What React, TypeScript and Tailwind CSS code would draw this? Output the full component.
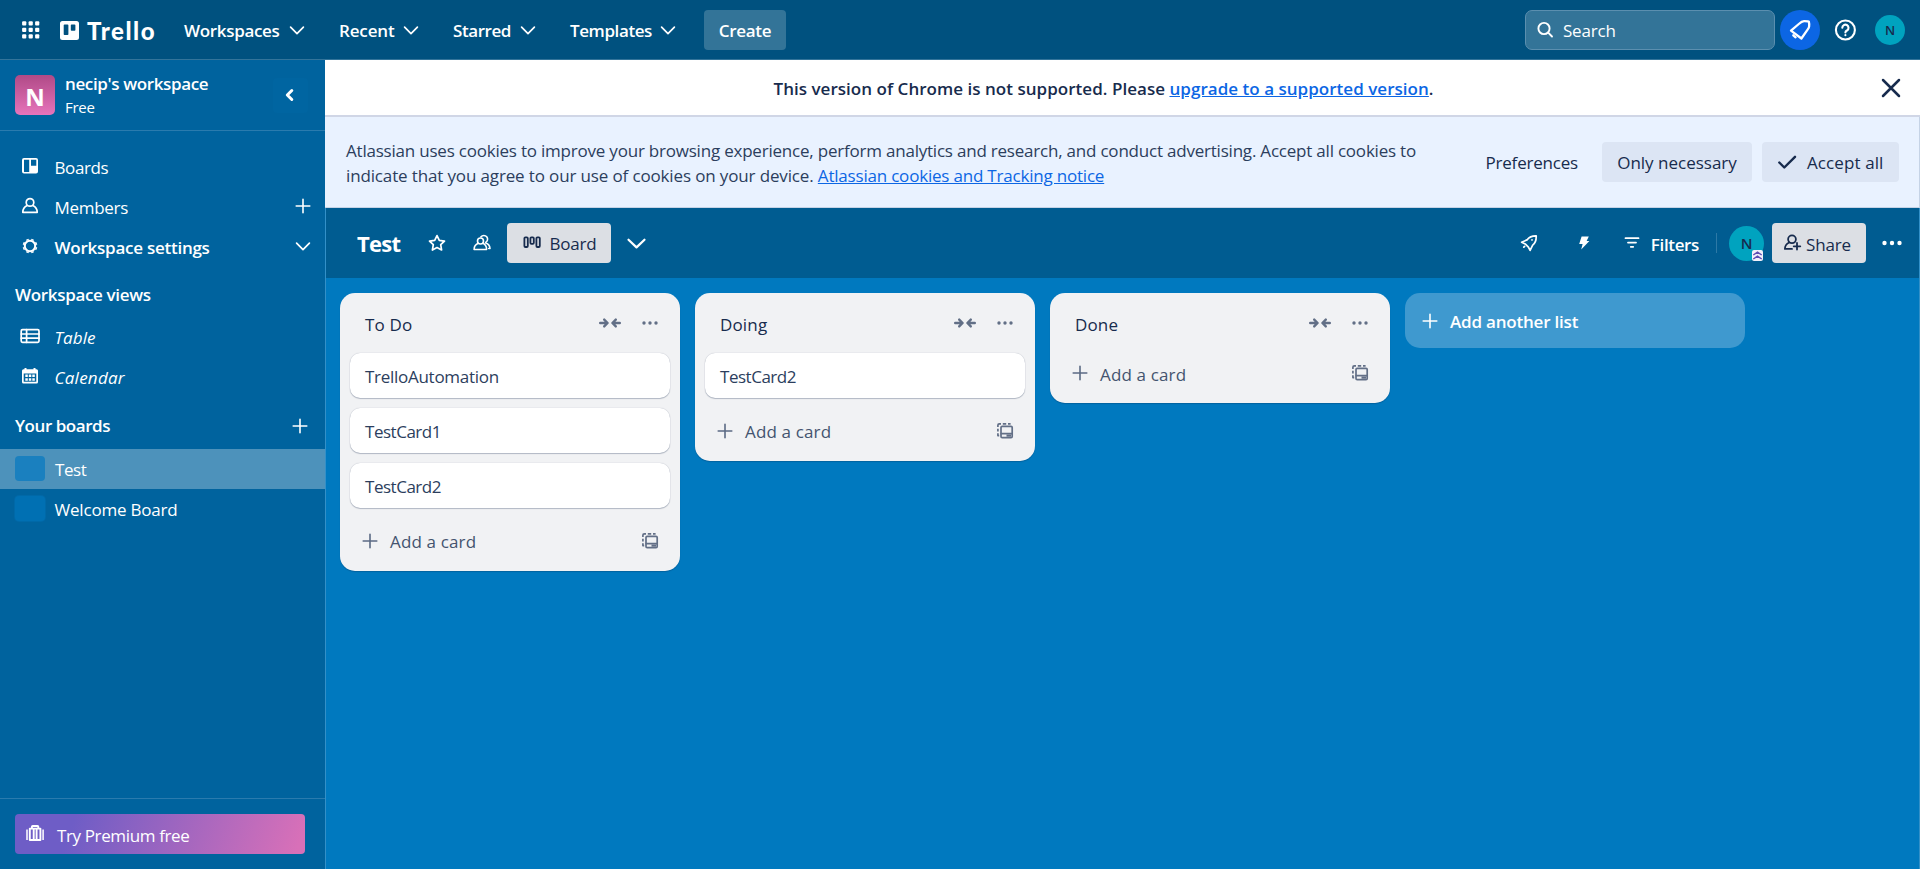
import React from "react";

type IconProps = { className?: string; children: React.ReactNode; w?: number };

function Icon({ className = "", children, w = 1.8 }: IconProps) {
  return (
    <svg
      viewBox="0 0 24 24"
      className={"size-6 shrink-0 " + className}
      fill="none"
      stroke="currentColor"
      strokeWidth={w}
      strokeLinecap="round"
      strokeLinejoin="round"
    >
      {children}
    </svg>
  );
}

const ChevronDown = ({ w = 1.7, className = "" }: { w?: number; className?: string }) => (
  <Icon w={w} className={className}>
    <path d="M5.6 9.2 12 15.6 18.4 9.2" />
  </Icon>
);
const Plus = ({ className = "" }: { className?: string }) => (
  <Icon w={1.6} className={className}>
    <path d="M12 5.2v13.6M5.2 12h13.6" />
  </Icon>
);
const BoardIcon = () => (
  <svg viewBox="0 0 24 24" className="size-6 shrink-0" fill="currentColor">
    <path
      fillRule="evenodd"
      d="M6 4h12a2 2 0 0 1 2 2v11.5a2 2 0 0 1-2 2H6a2 2 0 0 1-2-2V6a2 2 0 0 1 2-2Zm0 1.7v12.2h5.2V5.7Zm7 0v6h5.3v-6Z"
    />
  </svg>
);
const PersonIcon = () => (
  <Icon w={1.7}>
    <circle cx="12" cy="8.4" r="3.8" />
    <path d="M9.2 11.6c-2.6 1.2-4.4 3.700-4.400 6.700h14.400c0-3-1.800-5.500-4.400-6.700" />
  </Icon>
);
const GearIcon = () => (
  <Icon w={2}>
    <circle cx="12" cy="12" r="5.200" />
    <path
      strokeWidth="2.600"
      strokeLinecap="butt"
      d="M9.800 6.600 9.200 5.200M14.200 6.600l.6-1.400M17.400 9.800l1.400-.6M17.400 14.200l1.400.6M14.200 17.400l.6 1.400M9.800 17.400l-.6 1.400M6.600 14.200l-1.400.6M6.600 9.800l-1.400-.6"
    />
  </Icon>
);
const TableIcon = () => (
  <Icon w={1.7}>
    <rect x="3.200" y="5.700" width="17.800" height="12.600" rx="1.300" />
    <path d="M3.200 10h17.800M3.200 14.200h17.800M8.600 5.700v12.600" />
  </Icon>
);
const CalendarIcon = () => (
  <svg viewBox="0 0 24 24" className="size-6 shrink-0" fill="currentColor">
    <path
      fillRule="evenodd"
      d="M6.500 4h2v1.300h7V4h2v1.300h1A1.500 1.500 0 0 1 20 6.800V18a1.500 1.500 0 0 1-1.500 1.500h-13A1.500 1.500 0 0 1 4 18V6.800a1.500 1.500 0 0 1 1.500-1.500h1ZM5.700 9.500V17.800H18.300V9.500Z"
    />
    <path d="M7.300 10.500h2.500v2.500H7.300zM10.800 10.500h2.500v2.500h-2.500zM14.300 10.500h2.500v2.500h-2.500zM7.300 14.300h2.500v2.500H7.300zM10.800 14.300h2.500v2.500h-2.500zM14.300 14.300h2.500v2.500h-2.500z" />
  </svg>
);
const GridIcon = () => (
  <svg viewBox="0 0 18 18" className="size-[18px] shrink-0" fill="currentColor">
    {[0.3, 6.8, 13.3].map((y) =>
      [0.1, 6.6, 13.1].map((x) => <rect key={x + "-" + y} x={x} y={y} width="4.200" height="4.200" rx="1" />)
    )}
  </svg>
);
const TrelloMark = () => (
  <svg viewBox="0 0 19 19" className="mt-px size-[19px] shrink-0" fill="currentColor">
    <path
      fillRule="evenodd"
      d="M2.500 0h14A2.500 2.500 0 0 1 19 2.500v14a2.500 2.500 0 0 1-2.500 2.500h-14A2.500 2.500 0 0 1 0 16.500v-14A2.500 2.500 0 0 1 2.500 0ZM4.500 3.500a.8.8 0 0 0-.8.8v9a.8.8 0 0 0 .8.8H7.600a.8.8 0 0 0 .8-.8v-9a.8.8 0 0 0-.8-.8ZM11.600 3.500a.8.8 0 0 0-.8.8V9a.8.8 0 0 0 .8.8h3a.8.8 0 0 0 .8-.8V4.300a.8.8 0 0 0-.8-.8Z"
    />
  </svg>
);
const TemplateIcon = () => (
  <Icon w={1.7}>
    <rect x="8" y="7.400" width="11.200" height="11.200" rx="1.200" />
    <path d="M8.300 14.600h10.600" />
    <path strokeWidth="2.200" strokeLinecap="butt" d="M13.500 16.600h4.500" />
    <path strokeLinecap="butt" d="M4.900 8V6.300a1.400 1.400 0 0 1 1.400-1.400H8M9.800 4.900h3.400M15 4.900h2.600M4.900 9.800v2.800M4.900 14.200v2.400h1.300" />
  </Icon>
);
const Collapse = () => (
  <Icon w={2.4}>
    <path d="M2.200 12h7M6.200 8.600 9.600 12l-3.400 3.400M21.800 12h-7M17.800 8.600 14.400 12l3.400 3.400" />
  </Icon>
);
const Dots = ({ gap, r }: { gap: number; r: number }) => (
  <svg viewBox="0 0 24 24" className="size-6 shrink-0" fill="currentColor">
    <circle cx={12 - gap} cy="12" r={r} />
    <circle cx="12" cy="12" r={r} />
    <circle cx={12 + gap} cy="12" r={r} />
  </svg>
);

function NavMenu({ label, className }: { label: string; className: string }) {
  return (
    <div className="flex h-10 items-center gap-[6px]">
      <span className={"mt-[3px] font-semibold " + className}>{label}</span>
      <ChevronDown />
    </div>
  );
}

function TopBar() {
  return (
    <header className="flex h-[60px] shrink-0 items-center border-b border-[#33749a] bg-[#00517f] pl-[22px] text-white">
      <GridIcon />
      <div className="ml-5 flex items-center gap-[8px]">
        <TrelloMark />
        <span className="mt-[3px] w-[70px] font-['Lato',sans-serif] text-[24px] leading-6 font-black tracking-[1.550px]">Trello</span>
      </div>
      <nav className="ml-[27px] flex gap-[30px]">
        <NavMenu label="Workspaces" className="w-[95px] tracking-[-0.330px]" />
        <NavMenu label="Recent" className="w-[54px] tracking-[-0.150px]" />
        <NavMenu label="Starred" className="w-[57px] tracking-[-0.430px]" />
        <NavMenu label="Templates" className="w-[80px] tracking-[-0.400px]" />
      </nav>
      <button className="ml-[24px] h-10 w-[82px] rounded-[4px] bg-[#337498] pt-[3px] font-semibold tracking-[-0.300px]">Create</button>
      <div className="ml-auto flex h-10 w-[250px] items-center rounded-[7px] border border-[#5b8faf] bg-[#337498] pl-[7px]">
        <Icon w={1.9}>
          <circle cx="11" cy="10.500" r="5.600" />
          <path d="m15.200 14.700 3.800 3.800" />
        </Icon>
        <span className="mt-[3px] ml-[6px] tracking-[-0.200px]">Search</span>
      </div>
      <div className="ml-[5px] flex size-10 items-center justify-center rounded-full bg-[#0c66e4]">
        <Icon w={2.3}>
          <path d="M3 12.700 10.800 6c1.800-1.600 3.200-2.700 5.200-2.800 1.800-.1 3.300.2 4.800.4.4 1.400.6 3.300.3 5-.2 1.200-.9 2.200-1.700 3.300L13.400 20.500Z" />
          <path d="m5.300 17.300 2.300 2" />
        </Icon>
      </div>
      <Icon w={2.1} className="mt-px ml-[13px]">
        <circle cx="12.400" cy="12" r="9.500" />
        <path d="M9.300 9.700a3.100 3.100 0 1 1 4.900 2.600c-1.200.8-1.800 1.100-1.800 2.100" />
        <path d="M12.400 17v.2" />
      </Icon>
      <div className="mr-[15px] ml-[18px] flex size-[30px] items-center justify-center rounded-full bg-[#00a3bf] text-[13px] font-semibold text-[#172b4d]">N</div>
    </header>
  );
}

function SideRow({ icon, label, className, end }: { icon: React.ReactNode; label: string; className: string; end?: React.ReactNode }) {
  return (
    <div className="flex h-10 items-center pr-[10px] pl-[18px]">
      {icon}
      <span className={"mt-[3px] ml-[12.500px] flex-1 " + className}>{label}</span>
      {end}
    </div>
  );
}

function Sidebar() {
  return (
    <aside className="flex w-[325px] shrink-0 flex-col bg-[#00639e] text-white">
      <div className="flex h-[71px] shrink-0 items-center border-b border-[#2a7bae] pl-[15px]">
        <div className="flex size-10 items-center justify-center rounded-[5px] bg-linear-to-b from-[#b04a87] to-[#e774bb] pt-[3px] text-[24px] leading-none font-bold">N</div>
        <div className="ml-[10px] flex-1">
          <div className="text-[17px] leading-6 font-semibold tracking-[-0.370px]">necip's workspace</div>
          <div className="text-[15px] leading-[22px] tracking-[-0.300px]">Free</div>
        </div>
        <div className="mr-[17px] flex size-[35px] items-center justify-center rounded-[4px] bg-[#0065a1]">
          <Icon w={3}>
            <path d="m12.800 7.500-4.500 4.500 4.500 4.500" />
          </Icon>
        </div>
      </div>
      <div className="mt-[15px]">
        <SideRow icon={<BoardIcon />} label="Boards" className="tracking-[-0.400px]" />
        <SideRow icon={<PersonIcon />} label="Members" className="tracking-[-0.300px]" end={<Plus />} />
        <SideRow icon={<GearIcon />} label="Workspace settings" className="font-semibold tracking-[-0.250px]" end={<ChevronDown />} />
      </div>
      <div className="mt-[17px] h-6 pl-[15px] leading-6 font-semibold tracking-[-0.330px]">Workspace views</div>
      <div className="mt-[9px]">
        <SideRow icon={<TableIcon />} label="Table" className="tracking-[0.100px] italic" />
        <SideRow icon={<CalendarIcon />} label="Calendar" className="tracking-[0.250px] italic" />
      </div>
      <div className="mt-[17px] flex h-6 items-center pr-[13px] pl-[15px]">
        <span className="mt-[2px] flex-1 font-semibold tracking-[-0.450px]">Your boards</span>
        <Plus className="mt-px" />
      </div>
      <div className="mt-3 flex h-10 shrink-0 items-center bg-[#4d92bb] pl-[15px]">
        <div className="mb-px h-[25px] w-[30px] rounded-[4px] bg-[#1a80bf]" />
        <span className="mt-px ml-[10px] tracking-[-0.450px]">Test</span>
      </div>
      <div className="flex h-10 shrink-0 items-center pl-[15px]">
        <div className="mb-px h-[25px] w-[30px] rounded-[4px] bg-[#0070b3] ring-1 ring-[#0069a8]" />
        <span className="mt-px ml-[9.500px] tracking-[-0.200px]">Welcome Board</span>
      </div>
      <div className="mt-auto border-t border-[#2a7bae] pt-[15px] pr-5 pb-[15px] pl-[15px]">
        <div className="flex h-10 items-center rounded-[4px] bg-[linear-gradient(110deg,#6e5dc6_20%,#d870b8_97%)] pl-2">
          <svg viewBox="0 0 24 24" className="size-6 shrink-0" fill="none" stroke="currentColor" strokeWidth="1.900" strokeLinejoin="round">
            <rect x="6.800" y="6.600" width="10.600" height="11.400" />
            <path d="M8.900 6.500V4.800a.8.8 0 0 1 .8-.8h4.800a.8.8 0 0 1 .8.8v1.700M10.700 7v11M13.600 7v11" />
            <path strokeWidth="1.500" d="M4 7.500v10.500M20.100 7.500v10.500" />
          </svg>
          <span className="mt-[3px] ml-[10px] tracking-[-0.370px]">Try Premium free</span>
        </div>
      </div>
    </aside>
  );
}

function Notices() {
  return (
    <>
      <div className="flex h-[57px] shrink-0 items-center border-b-2 border-[#d0d6e6] bg-white pr-[17px] text-[#172b4d]">
        <p className="mt-[2px] ml-[448.500px] flex-1 font-semibold tracking-[0.030px] whitespace-nowrap">
          This version of Chrome is not supported. Please{" "}
          <a className="text-[#0c66e4] underline">upgrade to a supported version</a>.
        </p>
        <Icon w={2.5}>
          <path d="m4 4 16 16M20 4 4 20" />
        </Icon>
      </div>
      <div className="flex h-[91px] shrink-0 items-center border-r border-b border-[#c5d3e6] bg-[#e9f2ff] pr-5 pl-[21px] text-[#172b4d]">
        <p className="mt-px leading-[25px] whitespace-nowrap text-[#2c3e5d]">
          <span className="tracking-[-0.212px]">
            Atlassian uses cookies to improve your browsing experience, perform analytics and research, and conduct advertising. Accept all cookies to
          </span>
          <br />
          <span className="tracking-[-0.140px]">indicate that you agree to our use of cookies on your device. </span>
          <a className="tracking-[-0.200px] text-[#0c66e4] underline">Atlassian cookies and Tracking notice</a>
        </p>
        <span className="mt-px ml-auto tracking-[-0.200px]">Preferences</span>
        <button className="ml-6 h-10 w-[150px] rounded-[4px] bg-[#dce5f4] pt-[2px]">Only necessary</button>
        <button className="ml-[10px] flex h-10 w-[137px] items-center gap-[8px] rounded-[4px] bg-[#dce5f4] pl-[13px]">
          <Icon w={2.4}>
            <path d="m4.300 12.500 5 5L20 6.800" />
          </Icon>
          <span className="mt-[2px] tracking-[0.100px]">Accept all</span>
        </button>
      </div>
    </>
  );
}

function BoardHeader() {
  return (
    <div className="flex h-[70px] shrink-0 items-center bg-[#005c91] pr-[15px] pl-[31px] text-white">
      <h1 className="w-[68px] text-[22px] font-bold tracking-[-0.700px]">Test</h1>
      <Icon w={1.7}>
        <path d="m12 4.600 2.300 4.800 5.200.7-3.800 3.600.9 5.300-4.600-2.500L7.400 19l.9-5.300-3.800-3.600 5.200-.7Z" />
      </Icon>
      <Icon w={1.6} className="ml-[21px]">
        <circle cx="10.500" cy="10" r="3" />
        <path d="M8.200 12.300c-2.400 1-4.100 3.200-4.100 6.200h12.500c0-3-1.500-5.200-3.900-6.200M11 5.800a3.700 3.700 0 1 1 4.600 5.600M15.800 12c2.200.8 4 2.800 4.200 5.500h-1.300" />
      </Icon>
      <button className="ml-[13px] flex h-10 w-[104px] items-center rounded-[4px] bg-[#dcdfe4] pl-[13px] text-[#172b4d]">
        <Icon w={1.8}>
          <rect x="4.400" y="6.300" width="3.400" height="9.700" rx="1" />
          <rect x="10.400" y="6.300" width="3.400" height="6.500" rx="1" />
          <rect x="16.400" y="6.300" width="3.400" height="9.700" rx="1" />
        </Icon>
        <span className="mt-[2px] ml-[5.500px] tracking-[-0.200px]">Board</span>
      </button>
      <svg viewBox="0 0 24 24" className="ml-[13px] size-6 shrink-0" fill="none" stroke="currentColor" strokeWidth="2.200" strokeLinecap="round" strokeLinejoin="round">
        <path d="m4.500 8.700 8 7.700 8-7.700" />
      </svg>
      <div className="ml-auto flex items-center">
        <Icon w={1.7}>
          <path d="M19.200 4.800c-4.300-.1-7.200 1.300-9.200 4.100L4.600 11.200l3.600 1.700 3.200 3.200 1.700 3.300 2.600-5.200c2.700-2.100 3.700-5.200 3.500-9.400Z" />
          <path d="M15 8.800v.2M7.600 15.400l-.8.800" />
        </Icon>
        <svg viewBox="0 0 24 24" className="ml-[31px] size-6" fill="currentColor">
          <path d="M9.600 5.500h7.200L14.600 10h2.800L9.200 18.600 10.600 13H7.200Z" />
        </svg>
        <Icon w={1.8} className="ml-6">
          <path d="M5.500 7.200h13M8 11.600h8M10.800 15.800h2.400" />
        </Icon>
        <span className="mt-[3px] ml-[7px] font-semibold tracking-[-0.350px]">Filters</span>
        <div className="ml-[17px] h-5 w-px bg-[#2d79a6]" />
        <div className="relative ml-[12px] flex size-[35px] items-center justify-center rounded-full bg-[#00a3bf] text-[15px] font-semibold text-[#172b4d]">
          N
          <span className="absolute right-px bottom-0 flex size-[11px] items-center justify-center rounded-[2px] bg-[#f1f0fa]">
            <svg viewBox="0 0 11 11" className="size-[11px]" fill="none" stroke="#5e4db2" strokeWidth="1.500">
              <path d="m1.300 5 4.200-2.800L9.700 5M1.300 9l4.200-2.800L9.700 9" />
            </svg>
          </span>
        </div>
        <button className="ml-2 flex h-10 w-[94px] items-center rounded-[4px] bg-[#dcdfe4] pl-2 text-[#172b4d]">
          <Icon w={1.8}>
            <circle cx="12" cy="8.300" r="3.900" />
            <path d="M9.200 11.500c-2.600 1.200-4.300 3.500-4.300 6.400H12M17 12v6.600M13.700 15.300h6.600" />
          </Icon>
          <span className="mt-[3px] ml-[2px] tracking-[-0.150px]">Share</span>
        </button>
        <div className="ml-[14px] flex">
          <Dots gap={7.5} r={2.2} />
        </div>
      </div>
    </div>
  );
}

function List({ title, cards }: { title: string; cards: string[] }) {
  return (
    <section className="flex w-[340px] shrink-0 flex-col rounded-[15px] bg-[#f1f2f4] px-[10px] text-[#172b4d] shadow-[0_1px_1px_rgba(9,30,66,0.25)]">
      <div className="flex h-[47px] items-center pt-[13px] pr-[8px] pl-[15px]">
        <h2 className="mt-[4px] flex-1 tracking-[0.150px]">{title}</h2>
        <div className="flex gap-4 text-[#626f86]">
          <Collapse />
          <Dots gap={6} r={1.7} />
        </div>
      </div>
      {cards.length > 0 && (
        <div className="flex flex-col gap-[10px] pt-[13px]">
          {cards.map((c) => (
            <div
              key={c}
              className="flex h-[45px] items-center rounded-[10px] bg-white pt-[2px] pl-[15px] tracking-[-0.350px] text-[#2c3e5d] shadow-[0_1px_1px_rgba(9,30,66,0.25),0_0_1px_rgba(9,30,66,0.31)]"
            >
              {c === "TrelloAutomation" ? <span className="tracking-[-0.280px]">{c}</span> : <span className="tracking-[-0.480px]">{c}</span>}
            </div>
          ))}
        </div>
      )}
      <div className="flex h-[63px] items-center pt-[3px] pr-[8px] pl-2 text-[#44546f]">
        <Plus className="text-[#5b6a84]" />
        <span className={"ml-[8px] flex-1 tracking-[0.150px] " + (cards.length > 0 ? "mt-px" : "mt-[3px]")}>Add a card</span>
        <span className="text-[#626f86]">
          <TemplateIcon />
        </span>
      </div>
    </section>
  );
}

export default function App() {
  return (
    <div className="flex h-[869px] w-full flex-col overflow-hidden bg-[#0079bf] font-['Open_Sans','Noto_Sans',sans-serif] text-[17px] leading-6">
      <TopBar />
      <div className="flex min-h-0 flex-1">
        <Sidebar />
        <main className="flex min-w-0 flex-1 flex-col">
          <Notices />
          <div className="flex flex-1 flex-col border-x border-[#3390c8]">
            <BoardHeader />
            <div className="flex items-start gap-[15px] pt-[15px] pl-[14px]">
              <List title="To Do" cards={["TrelloAutomation", "TestCard1", "TestCard2"]} />
              <List title="Doing" cards={["TestCard2"]} />
              <List title="Done" cards={[]} />
              <button className="flex h-[55px] w-[340px] items-center rounded-[15px] bg-[#3f99cf] pl-[13px] text-white">
                <Plus />
                <span className="mt-[2px] ml-[8px] font-semibold tracking-[-0.200px]">Add another list</span>
              </button>
            </div>
          </div>
        </main>
      </div>
    </div>
  );
}
